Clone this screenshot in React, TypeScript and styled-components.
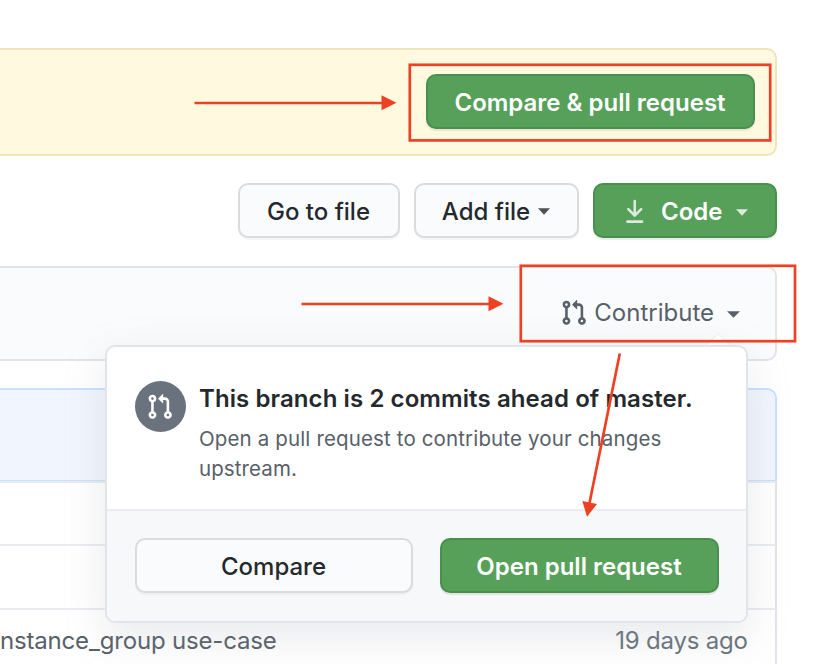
import React from "react";
import styled, { createGlobalStyle } from "styled-components";

const GlobalStyle = createGlobalStyle`
  *, *::before, *::after { box-sizing: border-box; }
  html, body { margin: 0; padding: 0; background: #fff; overflow: hidden; }
  body { font-family: Inter, "Liberation Sans", sans-serif; color: #24292e; }
`;

const Page = styled.main`
  position: relative;
  width: 824px;
  height: 664px;
  overflow: hidden;
  padding-top: 48px;
`;

const Content = styled.div`
  width: 777px;
  display: flex;
  flex-direction: column;
`;

const Banner = styled.section`
  height: 108px;
  display: flex;
  justify-content: flex-end;
  align-items: flex-start;
  padding: 24px 20px 0 0;
  background: #fff9e0;
  border: 2px solid #efe4bc;
  border-left: 0;
  border-radius: 0 10px 10px 0;
`;

const Label = styled.span<{ $spacing?: number }>`
  letter-spacing: ${(p) => p.$spacing ?? 0}px;
  margin-right: ${(p) => -(p.$spacing ?? 0)}px;
  white-space: nowrap;
`;

const Button = styled.button<{ $primary?: boolean; $width: number }>`
  width: ${(p) => p.$width}px;
  height: 55px;
  flex: none;
  display: flex;
  align-items: center;
  justify-content: center;
  padding: 2px 1px 0 0;
  font: ${(p) => (p.$primary ? 600 : 500)} 24px/34px Inter, "Liberation Sans", sans-serif;
  color: ${(p) => (p.$primary ? "#fff" : "#24292e")};
  background: ${(p) => (p.$primary ? "#56a05a" : "#fafbfc")};
  border: 2px solid ${(p) => (p.$primary ? "#4a8f4e" : "#d9dbdc")};
  border-radius: 10px;
  box-shadow: 0 2px 1px rgba(27, 31, 35, ${(p) => (p.$primary ? 0.09 : 0.04)});
`;

const Toolbar = styled.nav`
  display: flex;
  justify-content: flex-end;
  gap: 14px;
  margin-top: 27px;
`;

const CaretSvg = styled.svg<{ $gap: number; $drop?: number }>`
  flex: none;
  margin-left: ${(p) => p.$gap}px;
  margin-top: ${(p) => p.$drop ?? 0}px;
`;

const CompareBar = styled.section`
  height: 95px;
  margin-top: 28px;
  display: flex;
  justify-content: flex-end;
  align-items: center;
  padding: 0 35px 2px 0;
  background: #fafbfc;
  border: 2px solid #e1e4e8;
  border-left: 0;
  border-radius: 0 10px 10px 0;
`;

const Contribute = styled.div`
  display: flex;
  align-items: center;
  font-size: 24px;
  line-height: 34px;
  color: #586069;
  svg:first-child { margin-right: 7px; }
`;

const FileList = styled.section`
  margin-top: 27px;
  height: 300px;
`;

const LatestCommit = styled.div`
  height: 93px;
  background: #f1f6fe;
  border: 2px solid #c8e1ff;
  border-bottom-width: 1px;
  border-left: 0;
  border-radius: 0 10px 0 0;
`;

const FileRow = styled.div`
  height: 64px;
  display: flex;
  justify-content: space-between;
  align-items: center;
  padding: 0 27px 2px 0;
  font-size: 24px;
  color: #586069;
  border-top: 2px solid #eaecef;
  border-right: 2px solid #e1e4e8;
  &:nth-child(2) { height: 63px; }
`;

const Age = styled.time`
  color: #6a737d;
`;

const Popover = styled.aside`
  position: absolute;
  left: 105px;
  top: 345px;
  width: 643px;
  height: 278px;
  display: flex;
  flex-direction: column;
  background: #fff;
  border: 2px solid #e1e4e8;
  border-radius: 10px;
  box-shadow: 0 14px 41px rgba(149, 157, 165, 0.22);
`;

const Tail = styled.svg`
  position: absolute;
  right: 15px;
  top: -14px;
`;

const Summary = styled.div`
  flex: 1;
  display: flex;
  padding: 34px 28px 0;
  gap: 13px;
`;

const Badge = styled.span`
  width: 51px;
  height: 51px;
  flex: none;
  display: grid;
  place-items: center;
  padding-right: 1px;
  border-radius: 50%;
  background: #6a737d;
  color: #fff;
`;

const Title = styled.h2`
  margin: 1px 0 8px;
  font-size: 24px;
  line-height: 34px;
  font-weight: 600;
`;

const Description = styled.p`
  margin: 0;
  font-size: 20.5px;
  line-height: 30px;
  color: #586069;
`;

const Actions = styled.footer`
  height: 112px;
  display: flex;
  justify-content: space-between;
  padding: 27px 27px 0 28px;
  background: #f6f8fa;
  border-top: 2px solid #eaecef;
  border-radius: 0 0 8px 8px;
`;

const Annotations = styled.svg`
  position: absolute;
  inset: 0;
  pointer-events: none;
`;

const Caret = ({ color, gap, drop, width = 12 }: { color: string; gap: number; drop?: number; width?: number }) => (
  <CaretSvg $gap={gap} $drop={drop} width={width} height="7" viewBox="0 0 12 7" preserveAspectRatio="none">
    <path d="M0 .3H12L6 6.7Z" fill={color} />
  </CaretSvg>
);

const PullRequestIcon = () => (
  <svg width="27.5" height="27.5" viewBox="0 0 16 16" fill="currentColor">
    <path d="M7.177 3.073L9.573.677A.25.25 0 0110 .854v4.792a.25.25 0 01-.427.177L7.177 3.427a.25.25 0 010-.354zM3.75 2.5a.75.75 0 100 1.5.75.75 0 000-1.5zm-2.25.75a2.25 2.25 0 113 2.122v5.256a2.251 2.251 0 11-1.5 0V5.372A2.25 2.25 0 011.5 3.25zM11 2.5h-1V4h1a1 1 0 011 1v5.628a2.251 2.251 0 101.5 0V5A2.5 2.5 0 0011 2.5zm1 10.25a.75.75 0 111.5 0 .75.75 0 01-1.5 0zM3.75 12a.75.75 0 100 1.5.75.75 0 000-1.5z" />
  </svg>
);

const DownloadIconSvg = styled.svg`
  margin-right: 13px;
  flex: none;
`;

const DownloadIcon = () => (
  <DownloadIconSvg width="27.5" height="27.5" viewBox="0 0 16 16" fill="#dcebdd">
    <path d="M7.47 10.78a.75.75 0 001.06 0l3.75-3.75a.75.75 0 00-1.06-1.06L8.75 8.44V1.75a.75.75 0 00-1.5 0v6.69L4.78 5.97a.75.75 0 00-1.06 1.06l3.75 3.75zM3.75 13a.75.75 0 000 1.5h8.5a.75.75 0 000-1.5h-8.5z" />
  </DownloadIconSvg>
);

export default function App() {
  return (
    <>
      <GlobalStyle />
      <Page>
        <Content>
          <Banner>
            <Button $primary $width={329}><Label>Compare &amp; pull request</Label></Button>
          </Banner>
          <Toolbar>
            <Button $width={162}><Label>Go to file</Label></Button>
            <Button $width={165}><Label>Add file</Label><Caret color="#4d5257" gap={8} /></Button>
            <Button $primary $width={184}>
              <DownloadIcon />
              <Label>Code</Label>
              <Caret color="#dcebdd" gap={14} drop={2} />
            </Button>
          </Toolbar>
          <CompareBar>
            <Contribute>
              <PullRequestIcon />
              <Label>Contribute</Label>
              <Caret color="#586069" gap={13} drop={4} width={13} />
            </Contribute>
          </CompareBar>
          <FileList>
            <LatestCommit />
            <FileRow />
            <FileRow />
            <FileRow>
              <Label $spacing={-0.18}>nstance_group use-case</Label>
              <Age><Label $spacing={-0.2}>19 days ago</Label></Age>
            </FileRow>
          </FileList>
        </Content>
        <Popover>
          <Tail width="26" height="12" viewBox="0 0 26 12">
            <path d="M1 12L13 .5L25 12Z" fill="#fff" />
            <path d="M1 12L13 .7L25 12" fill="none" stroke="#e6e8eb" strokeWidth="1" />
          </Tail>
          <Summary>
            <Badge><PullRequestIcon /></Badge>
            <div>
              <Title><Label $spacing={0.09}>This branch is 2 commits ahead of master.</Label></Title>
              <Description>
                <Label $spacing={0.14}>Open a pull request to contribute your changes</Label>
                <br />
                <Label $spacing={0.1}>upstream.</Label>
              </Description>
            </div>
          </Summary>
          <Actions>
            <Button $width={278}><Label>Compare</Label></Button>
            <Button $primary $width={279}><Label>Open pull request</Label></Button>
          </Actions>
        </Popover>
        <Annotations width="824" height="664" viewBox="0 0 824 664" fill="none" stroke="#ee4023" strokeWidth="2.7">
          <rect x="409.8" y="64.8" width="360.4" height="75.6" />
          <rect x="520.8" y="265.8" width="274.2" height="75.4" />
          <path d="M194.5 103H382M301.5 304H490M619.8 353.5L589.5 503" />
          <path d="M381.5 95.2L396.5 102.7L381.5 110.2ZM488.5 296.2L503.5 303.7L488.5 311.2ZM582.3 501L597 504L587 516.7Z" fill="#ee4023" stroke="none" />
        </Annotations>
      </Page>
    </>
  );
}
